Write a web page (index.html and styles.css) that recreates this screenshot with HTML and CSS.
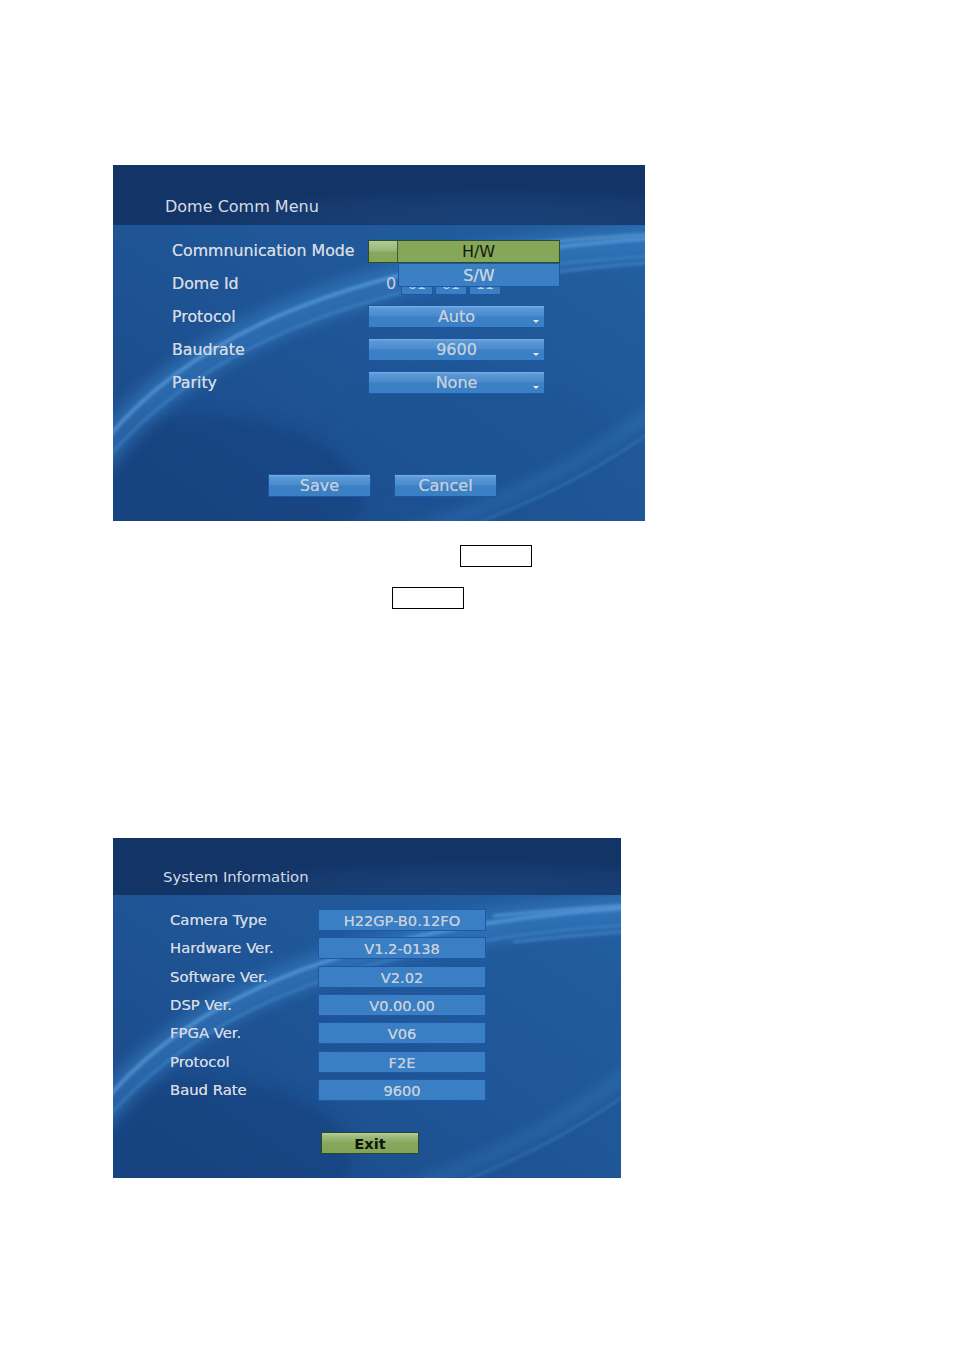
FILE: index.html
```html
<!DOCTYPE html>
<html>
<head>
<meta charset="utf-8">
<title>Dome Comm Menu</title>
<link rel="stylesheet" href="styles.css">
</head>
<body>
<div class="page">

  <div class="panel p1">
    <svg class="bg" viewBox="0 0 532 356" width="532" height="356" preserveAspectRatio="none">
      <defs>
        <linearGradient id="a1" x1="0" y1="1" x2="1" y2="0">
          <stop offset="0" stop-color="#1a4887"/>
          <stop offset="0.5" stop-color="#1f5697"/>
          <stop offset="1" stop-color="#2360a2"/>
        </linearGradient>
        <radialGradient id="h1" cx="0.72" cy="0.95" r="0.55">
          <stop offset="0" stop-color="#1a4278"/>
          <stop offset="0.8" stop-color="#163a6e"/>
          <stop offset="1" stop-color="#133467"/>
        </radialGradient>
        <filter id="f1a"><feGaussianBlur stdDeviation="7"/></filter>
        <filter id="f1b"><feGaussianBlur stdDeviation="1.4"/></filter>
      </defs>
      <rect width="532" height="356" fill="url(#a1)"/>
      <ellipse cx="80" cy="330" rx="170" ry="80" fill="#17407c" opacity="0.6" filter="url(#f1a)"/>
      <ellipse cx="360" cy="270" rx="140" ry="60" fill="#1d5292" opacity="0.5" filter="url(#f1a)"/>
      <path d="M-20 300 Q120 100 560 75" stroke="#3e88cf" stroke-width="34" fill="none" opacity="0.45" filter="url(#f1a)"/>
      <path d="M-20 292 Q120 96 560 72" stroke="#6aaeea" stroke-width="4" fill="none" opacity="0.55" filter="url(#f1b)"/>
      <path d="M-20 312 Q130 110 560 90" stroke="#4f98dc" stroke-width="3" fill="none" opacity="0.4" filter="url(#f1b)"/>
      <path d="M400 80 Q480 72 560 68" stroke="#7fbcf0" stroke-width="3" fill="none" opacity="0.45" filter="url(#f1b)"/>
      <path d="M420 110 Q490 100 560 96" stroke="#6aaeea" stroke-width="3" fill="none" opacity="0.35" filter="url(#f1b)"/>
      <path d="M260 380 Q440 330 560 230" stroke="#3c86cc" stroke-width="12" fill="none" opacity="0.35" filter="url(#f1a)"/>
      <path d="M300 380 Q460 330 560 250" stroke="#5aa2e2" stroke-width="2" fill="none" opacity="0.35" filter="url(#f1b)"/>
      <rect width="532" height="60" fill="url(#h1)"/>
      <rect y="59" width="532" height="1" fill="#163c72" opacity="0.5"/>
    </svg>

    <div class="head"><span class="title">Dome Comm Menu</span></div>

    <div class="form">
      <div class="row">
        <div class="lbl">Commnunication Mode</div>
        <div class="combo">
          <div class="combo-knob"></div>
          <div class="combo-val">H/W</div>
          <div class="combo-list">S/W</div>
        </div>
      </div>
      <div class="row">
        <div class="lbl">Dome Id</div>
        <div class="domeid">
          <span class="zero">0</span>
          <span class="idbox">01</span>
          <span class="idbox">01</span>
          <span class="idbox">11</span>
        </div>
      </div>
      <div class="row">
        <div class="lbl">Protocol</div>
        <div class="drop">Auto<span class="arrow"></span></div>
      </div>
      <div class="row">
        <div class="lbl">Baudrate</div>
        <div class="drop">9600<span class="arrow"></span></div>
      </div>
      <div class="row">
        <div class="lbl">Parity</div>
        <div class="drop">None<span class="arrow"></span></div>
      </div>
    </div>

    <div class="btns">
      <div class="btn">Save</div>
      <div class="btn">Cancel</div>
    </div>
  </div>

  <div class="outline o1"></div>
  <div class="outline o2"></div>

  <div class="panel p2">
    <svg class="bg" viewBox="0 0 508 340" width="508" height="340" preserveAspectRatio="none">
      <defs>
        <linearGradient id="a2" x1="0" y1="1" x2="1" y2="0">
          <stop offset="0" stop-color="#1a4887"/>
          <stop offset="0.5" stop-color="#1f5697"/>
          <stop offset="1" stop-color="#2360a2"/>
        </linearGradient>
        <radialGradient id="h2" cx="0.72" cy="0.95" r="0.55">
          <stop offset="0" stop-color="#1a4278"/>
          <stop offset="0.8" stop-color="#163a6e"/>
          <stop offset="1" stop-color="#133467"/>
        </radialGradient>
        <filter id="f2a"><feGaussianBlur stdDeviation="7"/></filter>
        <filter id="f2b"><feGaussianBlur stdDeviation="1.4"/></filter>
      </defs>
      <rect width="508" height="340" fill="url(#a2)"/>
      <ellipse cx="80" cy="318" rx="160" ry="76" fill="#17407c" opacity="0.6" filter="url(#f2a)"/>
      <path d="M-20 287 Q115 95 535 72" stroke="#3e88cf" stroke-width="32" fill="none" opacity="0.45" filter="url(#f2a)"/>
      <path d="M-20 279 Q115 92 535 69" stroke="#6aaeea" stroke-width="4" fill="none" opacity="0.55" filter="url(#f2b)"/>
      <path d="M-20 298 Q125 106 535 86" stroke="#4f98dc" stroke-width="3" fill="none" opacity="0.4" filter="url(#f2b)"/>
      <path d="M380 78 Q460 70 535 66" stroke="#7fbcf0" stroke-width="3" fill="none" opacity="0.45" filter="url(#f2b)"/>
      <path d="M400 104 Q470 96 535 92" stroke="#6aaeea" stroke-width="3" fill="none" opacity="0.35" filter="url(#f2b)"/>
      <path d="M250 365 Q420 315 535 220" stroke="#3c86cc" stroke-width="12" fill="none" opacity="0.35" filter="url(#f2a)"/>
      <path d="M290 365 Q440 315 535 240" stroke="#5aa2e2" stroke-width="2" fill="none" opacity="0.35" filter="url(#f2b)"/>
      <rect width="508" height="57" fill="url(#h2)"/>
    </svg>

    <div class="head"><span class="title">System Information</span></div>

    <div class="info">
      <div class="irow"><div class="ilbl">Camera Type</div><div class="ival">H22GP-B0.12FO</div></div>
      <div class="irow"><div class="ilbl">Hardware Ver.</div><div class="ival">V1.2-0138</div></div>
      <div class="irow"><div class="ilbl">Software Ver.</div><div class="ival">V2.02</div></div>
      <div class="irow"><div class="ilbl">DSP Ver.</div><div class="ival">V0.00.00</div></div>
      <div class="irow"><div class="ilbl">FPGA Ver.</div><div class="ival">V06</div></div>
      <div class="irow"><div class="ilbl">Protocol</div><div class="ival">F2E</div></div>
      <div class="irow"><div class="ilbl">Baud Rate</div><div class="ival">9600</div></div>
    </div>

    <div class="exitwrap"><div class="exit">Exit</div></div>
  </div>

</div>
</body>
</html>
```

FILE: styles.css
```css
* { box-sizing: border-box; }

html, body {
  margin: 0;
  padding: 0;
  background: #ffffff;
}

body {
  font-family: "DejaVu Sans", Verdana, sans-serif;
}

.page {
  display: flex;
  flex-direction: column;
  align-items: flex-start;
  padding-top: 165px;
  height: 1350px;
}

.panel {
  position: relative;
  overflow: hidden;
  margin-left: 113px;
  background: #1f5697;
}

.bg {
  position: absolute;
  left: 0;
  top: 0;
  display: block;
}

.head, .form, .btns, .info, .exitwrap {
  position: relative;
  z-index: 1;
}

/* ---------- Panel 1 ---------- */
.p1 {
  width: 532px;
  height: 356px;
}

.p1 .head {
  height: 60px;
  display: flex;
  align-items: flex-end;
  padding-left: 52px;
  padding-bottom: 9px;
}

.title {
  color: #d6dce6;
  font-size: 16px;
  line-height: 19px;
}

.form {
  padding-top: 14px;
  padding-left: 59px;
  display: flex;
  flex-direction: column;
  gap: 10px;
}

.row {
  display: flex;
  height: 23px;
  align-items: center;
}

.lbl {
  width: 196px;
  color: #d3d9e2;
  font-size: 15.8px;
  line-height: 19px;
  text-shadow: 0 0 0.6px #d3d9e2;
}

.combo {
  position: relative;
  align-self: flex-start;
  margin-top: 1px;
  width: 192px;
  height: 23px;
  display: flex;
  border: 1px solid #2c4e27;
  background: #86a75a;
}

.combo-knob {
  width: 29px;
  border-right: 1px solid #3b5f31;
  background: linear-gradient(#b5ca98 0%, #9ab77a 45%, #86a75a 55%, #86a75a 100%);
}

.combo-val {
  flex: 1;
  text-align: center;
  color: #111a0d;
  font-size: 16px;
  line-height: 22px;
}

.combo-list {
  position: absolute;
  left: 29px;
  top: 22px;
  width: 162px;
  height: 24px;
  z-index: 3;
  background: #3b80c5;
  border: 1px solid #1c58a8;
  color: #c8d2de;
  text-align: center;
  font-size: 16px;
  line-height: 23px;
  text-shadow: 0 0 0.6px #c8d2de;
}

.domeid {
  display: flex;
  align-items: flex-end;
  align-self: stretch;
  padding-left: 18px;
}

.zero {
  align-self: center;
  width: 15px;
  color: #c9d2de;
  font-size: 16px;
  line-height: 19px;
}

.idbox {
  width: 32px;
  height: 21px;
  margin-right: 2px;
  background: #3a7fc4;
  border: 1px solid #1d58a8;
  color: #c8d2de;
  font-size: 14px;
  line-height: 19px;
  text-align: center;
}

.drop {
  position: relative;
  width: 177px;
  height: 23px;
  border: 1px solid #1b56a8;
  background: linear-gradient(#78aee2 0%, #5a98d6 12%, #4a8bcd 48%, #3b7fc5 52%, #3b7fc5 100%);
  color: #c2cedb;
  text-align: center;
  font-size: 16px;
  line-height: 22px;
  text-shadow: 0 0 0.6px #c2cedb;
}

.arrow {
  position: absolute;
  right: 5px;
  bottom: 4px;
  width: 0;
  height: 0;
  border-left: 3px solid transparent;
  border-right: 3px solid transparent;
  border-top: 3px solid #e4ebf3;
}

.btns {
  display: flex;
  gap: 23px;
  margin-top: 80px;
  padding-left: 155px;
}

.btn {
  width: 103px;
  height: 23px;
  border: 1px solid #1b56a8;
  background: linear-gradient(#78aee2 0%, #5a98d6 12%, #4a8bcd 48%, #3b7fc5 52%, #3b7fc5 100%);
  color: #c2cedb;
  text-align: center;
  font-size: 16px;
  line-height: 22px;
  text-shadow: 0 0 0.6px #c2cedb;
}

/* ---------- Outline boxes ---------- */
.outline {
  width: 72px;
  height: 22px;
  border: 1.5px solid #000;
  background: #fff;
}

.o1 {
  margin-top: 24px;
  margin-left: 460px;
}

.o2 {
  margin-top: 20px;
  margin-left: 392px;
}

/* ---------- Panel 2 ---------- */
.p2 {
  margin-top: 229px;
  width: 508px;
  height: 340px;
}

.p2 .head {
  height: 57px;
  display: flex;
  align-items: flex-end;
  padding-left: 50px;
  padding-bottom: 9px;
}

.p2 .title {
  font-size: 14.8px;
  line-height: 18px;
}

.info {
  padding-top: 14px;
  padding-left: 57px;
  display: flex;
  flex-direction: column;
  gap: 6.33px;
}

.irow {
  display: flex;
  align-items: center;
  height: 22px;
}

.ilbl {
  width: 148px;
  color: #d3d9e2;
  font-size: 14.8px;
  line-height: 18px;
  text-shadow: 0 0 0.6px #d3d9e2;
}

.ival {
  width: 168px;
  height: 22px;
  background: #3a7fc4;
  border: 1px solid #1d58a8;
  color: #c6d0dc;
  text-align: center;
  font-size: 14.6px;
  line-height: 21px;
  text-shadow: 0 0 0.5px #c6d0dc;
}

.exitwrap {
  margin-top: 31px;
  padding-left: 208px;
}

.exit {
  width: 98px;
  height: 22px;
  border: 1px solid #2a4925;
  background: linear-gradient(#b6cb9a 0%, #9cb97c 20%, #88a85c 50%, #82a457 100%);
  color: #0f170c;
  text-align: center;
  font-size: 14.6px;
  font-weight: bold;
  line-height: 21px;
}
```
